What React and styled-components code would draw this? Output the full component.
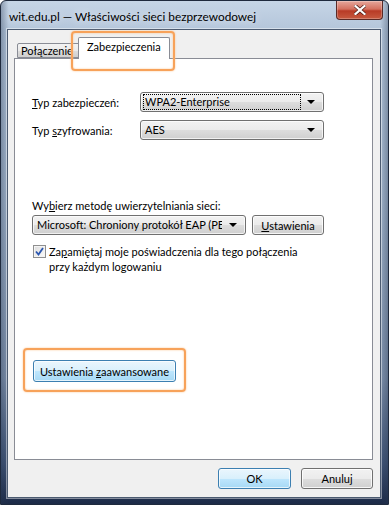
import styled, { createGlobalStyle } from "styled-components"

const Global = createGlobalStyle`
    html, body { margin: 0; padding: 0; }
    body {
        width: 389px;
        height: 505px;
        overflow: hidden;
        font-family: "Segoe UI", Lato, sans-serif;
        font-size: 11px;
        color: #000;
    }
`

const Window = styled.div`
    width: 389px;
    height: 505px;
    box-sizing: border-box;
    display: flex;
    flex-direction: column;
    border: 1px solid #1f2a3d;
    border-radius: 6px 6px 0 0;
    background:
        linear-gradient(90deg, rgba(40,55,80,0.35) 0%, rgba(255,255,255,0) 2%, rgba(255,255,255,0) 98%, rgba(40,55,80,0.35) 100%),
        linear-gradient(180deg, #c6d5e6 0%, #b3c5da 6%, #9fb2c9 40%, #7d90ab 75%, #3e5274 92%, #1c2a47 100%);
    padding: 0 7px 6px 6px;
`

const TitleBar = styled.div`
    height: 28px;
    flex: none;
    display: flex;
    align-items: center;
    justify-content: space-between;
    padding-left: 2px;
`

const Title = styled.div`
    font-size: 11.8px;
    white-space: nowrap;
    color: #000;
    text-shadow: 0 0 8px rgba(255,255,255,0.9);
    margin-top: 2px;
`

const CloseButton = styled.div`
    align-self: flex-start;
    width: 47px;
    height: 19px;
    margin-right: -2px;
    border: 1px solid #5a2a26;
    border-top: none;
    border-radius: 0 0 4px 4px;
    background: linear-gradient(180deg, #e6a79c 0%, #d4705f 45%, #b83b26 55%, #c75a40 100%);
    box-shadow: inset 0 0 0 1px rgba(255,255,255,0.25);
    display: flex;
    align-items: center;
    justify-content: center;
    box-sizing: border-box;
`

const Client = styled.div`
    flex: 1;
    background: #f0f0f0;
    border: 1px solid #4b5a70;
    box-shadow: 0 0 0 1px rgba(255,255,255,0.45);
    display: flex;
    flex-direction: column;
    padding: 7px 7px 8px 6px;
`

const TabStrip = styled.div`
    position: relative;
    flex: none;
    display: flex;
    align-items: flex-end;
    height: 21px;
    padding-left: 3px;
    z-index: 1;
`

const Tab = styled.div`
    box-sizing: border-box;
    height: ${p => (p.$active ? "22px" : "15px")};
    line-height: ${p => (p.$active ? "17px" : "13px")};
    padding: ${p => (p.$active ? "0 8px" : "0 6px 0 3px")};
    margin-bottom: ${p => (p.$active ? "-1px" : "0")};
    margin-left: ${p => (p.$active ? "-2px" : "0")};
    border: 1px solid #898c95;
    border-bottom: ${p => (p.$active ? "none" : "1px solid #898c95")};
    border-radius: 2px 2px 0 0;
    background: ${p => (p.$active ? "#fff" : "linear-gradient(180deg, #f3f3f3 0%, #ebebeb 50%, #dddddd 51%, #cfcfcf 100%)")};
    white-space: nowrap;
`

const Highlight = styled.div`
    position: absolute;
    border: 2px solid #f7a25a;
    border-radius: 4px;
    box-shadow: 0 0 2px #fbc08a, inset 0 0 2px #fbc08a;
    pointer-events: none;
`

const Panel = styled.div`
    height: 402px;
    flex: none;
    box-sizing: border-box;
    background: #fff;
    border: 1px solid #898c95;
    padding: 33px 48px 0 17px;
`

const FieldRow = styled.div`
    display: flex;
    align-items: center;
    margin-bottom: 8px;
`

const Label = styled.div`
    width: 109px;
    white-space: nowrap;
`

const Combo = styled.div`
    box-sizing: border-box;
    flex: none;
    width: ${p => p.$w || "auto"};
    height: 20px;
    border: 1px solid #707070;
    border-radius: 3px;
    background: linear-gradient(180deg, #f2f2f2 0%, #ebebeb 50%, #dddddd 51%, #cfcfcf 100%);
    box-shadow: inset 0 0 0 1px rgba(255,255,255,0.7);
    display: flex;
    align-items: center;
    padding: 0 8px 0 2px;
    gap: 6px;
`

const ComboText = styled.div`
    flex: 1;
    min-width: 0;
    overflow: hidden;
    white-space: nowrap;
    line-height: 14px;
    padding: 0 1px;
    border: 1px dotted ${p => (p.$focus ? "#000" : "transparent")};
`

const Arrow = styled.div`
    flex: none;
    width: 0;
    height: 0;
    border-left: 4px solid transparent;
    border-right: 4px solid transparent;
    border-top: 4px solid #000;
`

const Caption = styled.div`
    margin-top: 59px;
    margin-bottom: 3px;
    white-space: nowrap;
`

const MethodRow = styled.div`
    display: flex;
    gap: 6px;
`

const Button = styled.div`
    box-sizing: border-box;
    flex: none;
    width: ${p => p.$w};
    height: ${p => p.$h || "21px"};
    border: 1px solid ${p => (p.$default ? "#3c7fb1" : "#707070")};
    border-radius: 3px;
    background: ${p => (p.$default
        ? "linear-gradient(180deg, #eaf6fd 0%, #d9f0fc 50%, #bee6fd 51%, #a7d9f5 100%)"
        : "linear-gradient(180deg, #f2f2f2 0%, #ebebeb 50%, #dddddd 51%, #cfcfcf 100%)")};
    box-shadow: inset 0 0 0 1px ${p => (p.$default ? "rgba(255,255,255,0.7)" : "rgba(255,255,255,0.8)")};
    display: flex;
    align-items: center;
    justify-content: center;
    white-space: nowrap;
`

const CheckRow = styled.div`
    display: flex;
    align-items: flex-start;
    gap: 3px;
    margin-top: 9px;
    margin-left: 1px;
    line-height: 15px;
`

const CheckBox = styled.div`
    box-sizing: border-box;
    width: 13px;
    height: 13px;
    margin-top: 1px;
    flex: none;
    border: 1px solid #8f8f8f;
    background: linear-gradient(135deg, #dcdcdc, #fbfbfb);
    box-shadow: inset 0 0 0 1px #f4f4f4;
    display: flex;
    align-items: center;
    justify-content: center;
`

const AdvancedFrame = styled.div`
    margin-top: 74px;
    margin-left: -9px;
    width: 163px;
    height: 44px;
    box-sizing: border-box;
    border: 2px solid #f7a25a;
    border-radius: 4px;
    box-shadow: 0 0 2px #fbc08a, inset 0 0 2px #fbc08a;
    padding: 10px 0 0 8px;
`

const Footer = styled.div`
    display: flex;
    justify-content: flex-end;
    gap: 10px;
    margin-top: 8px;
`

const U = styled.span`
    text-decoration: underline;
`

const App = () => {
    return (
        <>
            <Global />
            <Window>
                <TitleBar>
                    <Title>wit.edu.pl — Właściwości sieci bezprzewodowej</Title>
                    <CloseButton>
                        <svg width="12" height="10" viewBox="0 0 12 10">
                            <path d="M1.5 1 L10.5 9 M10.5 1 L1.5 9" stroke="#4a1a14" strokeWidth="3.6" strokeLinecap="square" />
                            <path d="M1.5 1 L10.5 9 M10.5 1 L1.5 9" stroke="#fff" strokeWidth="2.2" strokeLinecap="square" />
                        </svg>
                    </CloseButton>
                </TitleBar>
                <Client>
                    <TabStrip>
                        <Tab>Połączenie</Tab>
                        <Tab $active>Zabezpieczenia</Tab>
                        <Highlight style={{ left: 57, top: -6, width: 100, height: 36 }} />
                    </TabStrip>
                    <Panel>
                        <FieldRow>
                            <Label><U>T</U>yp zabezpieczeń:</Label>
                            <Combo $w="184px">
                                <ComboText $focus>WPA2-Enterprise</ComboText>
                                <Arrow />
                            </Combo>
                        </FieldRow>
                        <FieldRow>
                            <Label>Typ <U>s</U>zyfrowania:</Label>
                            <Combo $w="184px">
                                <ComboText>AES</ComboText>
                                <Arrow />
                            </Combo>
                        </FieldRow>
                        <Caption>Wy<U>b</U>ierz metodę uwierzytelniania sieci:</Caption>
                        <MethodRow>
                            <Combo $w="214px">
                                <ComboText>Microsoft: Chroniony protokół EAP (PEAP)</ComboText>
                                <Arrow />
                            </Combo>
                            <Button $w="72px" $h="20px"><span><U>U</U>stawienia</span></Button>
                        </MethodRow>
                        <CheckRow>
                            <CheckBox>
                                <svg width="9" height="9" viewBox="0 0 9 9">
                                    <path d="M1 4.5 L3.5 7.5 L8 1" fill="none" stroke="#2a56b0" strokeWidth="1.8" />
                                </svg>
                            </CheckBox>
                            <div>Za<U>p</U>amiętaj moje poświadczenia dla tego połączenia<br />przy każdym logowaniu</div>
                        </CheckRow>
                        <AdvancedFrame>
                            <Button $w="143px" $h="22px" $default><span>Ustawienia <U>z</U>aawansowane</span></Button>
                        </AdvancedFrame>
                    </Panel>
                    <Footer>
                        <Button $w="73px" $default>OK</Button>
                        <Button $w="72px">Anuluj</Button>
                    </Footer>
                </Client>
            </Window>
        </>
    )
}

export default App
